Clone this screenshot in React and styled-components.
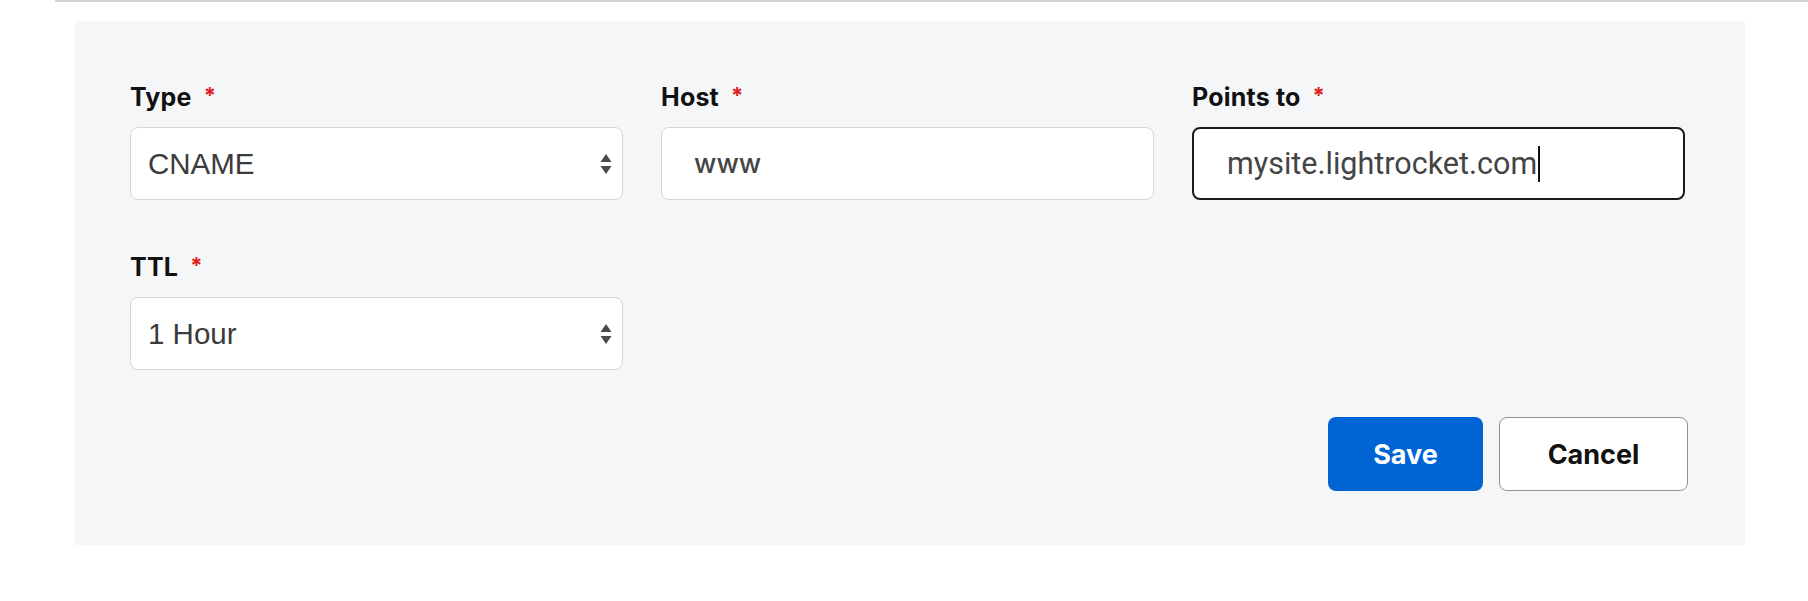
import React from "react";
import styled, { createGlobalStyle } from "styled-components";

const GlobalStyle = createGlobalStyle`
  body {
    margin: 0;
    background: #ffffff;
    font-family: Inter, "Noto Sans", sans-serif;
  }
`;

const Page = styled.div`
  width: 1808px;
  height: 601px;
  overflow: hidden;
`;

const TopRule = styled.div`
  margin-left: 55px;
  height: 2px;
  background: #d2d2d2;
  box-shadow: 0 2px 6px rgba(0, 0, 0, 0.03);
`;

const Panel = styled.div`
  margin: 19px 0 0 75px;
  width: 1670px;
  box-sizing: border-box;
  background: #f5f6f8;
  padding: 61px 57px 54px 55px;
`;

const Grid = styled.div`
  display: grid;
  grid-template-columns: repeat(3, 493px);
  column-gap: 38px;
  row-gap: 52px;
`;

const Field = styled.div`
  display: flex;
  flex-direction: column;
  gap: 15px;
`;

const Label = styled.label`
  display: flex;
  align-items: center;
  gap: 12px;
  height: 30px;
  font-family: Inter, sans-serif;
  font-weight: 700;
  font-size: 25px;
  letter-spacing: 0.2px;
  color: #111111;
`;

const Star = styled.span`
  color: #e01b1b;
  font-size: 22px;
  margin-top: -4px;
`;

const SelectWrap = styled.div`
  position: relative;
  height: 73px;
`;

const Select = styled.select`
  appearance: none;
  width: 100%;
  height: 100%;
  box-sizing: border-box;
  border: 1.5px solid #d6d6d6;
  border-radius: 8px;
  background: #ffffff;
  padding: 0 17px;
  font-family: "Liberation Sans", Arial, sans-serif;
  font-size: 29.5px;
  color: #3b3b3b;
  outline: none;
`;

const Arrows = styled.svg`
  position: absolute;
  right: 10px;
  top: 50%;
  transform: translateY(-50%);
  pointer-events: none;
`;

const TextBox = styled.div`
  height: 73px;
  box-sizing: border-box;
  display: flex;
  align-items: center;
  background: #ffffff;
  border-radius: 8px;
  border: ${(p) => (p.$focused ? "2px solid #1b1b1b" : "1.5px solid #d6d6d6")};
  padding-left: ${(p) => (p.$focused ? "33px" : "32px")};
  font-family: ${(p) => (p.$focused ? "Roboto, sans-serif" : "Inter, sans-serif")};
  font-weight: ${(p) => (p.$focused ? 400 : 500)};
  font-size: ${(p) => (p.$focused ? "30.5px" : "27px")};
  color: #444444;
`;

const Caret = styled.span`
  display: inline-block;
  width: 2px;
  height: 36px;
  background: #111111;
  margin-left: 1px;
`;

const Actions = styled.div`
  display: flex;
  justify-content: flex-end;
  gap: 16px;
  margin-top: 47px;
`;

const Button = styled.button`
  height: 74px;
  width: ${(p) => (p.$primary ? "155px" : "189px")};
  box-sizing: border-box;
  border-radius: 8px;
  border: ${(p) => (p.$primary ? "none" : "1.5px solid #8f9398")};
  background: ${(p) => (p.$primary ? "#0164d4" : "#ffffff")};
  color: ${(p) => (p.$primary ? "#ffffff" : "#111111")};
  font-family: Inter, sans-serif;
  font-weight: 700;
  font-size: 27px;
  cursor: pointer;
`;

const SelectField = ({ label, value }) => (
  <Field>
    <Label>
      {label}
      <Star>*</Star>
    </Label>
    <SelectWrap>
      <Select defaultValue={value}>
        <option>{value}</option>
      </Select>
      <Arrows width="14" height="22" viewBox="0 0 14 22">
        <path d="M7 1 L12.5 9 L1.5 9 Z" fill="#4a4a4a" />
        <path d="M7 21 L12.5 13 L1.5 13 Z" fill="#4a4a4a" />
      </Arrows>
    </SelectWrap>
  </Field>
);

const InputField = ({ label, value, focused }) => (
  <Field>
    <Label>
      {label}
      <Star>*</Star>
    </Label>
    <TextBox $focused={focused}>
      {value}
      {focused && <Caret />}
    </TextBox>
  </Field>
);

export default function App() {
  return (
    <Page>
      <GlobalStyle />
      <TopRule />
      <Panel>
        <Grid>
          <SelectField label="Type" value="CNAME" />
          <InputField label="Host" value="www" />
          <InputField label="Points to" value="mysite.lightrocket.com" focused />
          <SelectField label="TTL" value="1 Hour" />
        </Grid>
        <Actions>
          <Button $primary>Save</Button>
          <Button>Cancel</Button>
        </Actions>
      </Panel>
    </Page>
  );
}
